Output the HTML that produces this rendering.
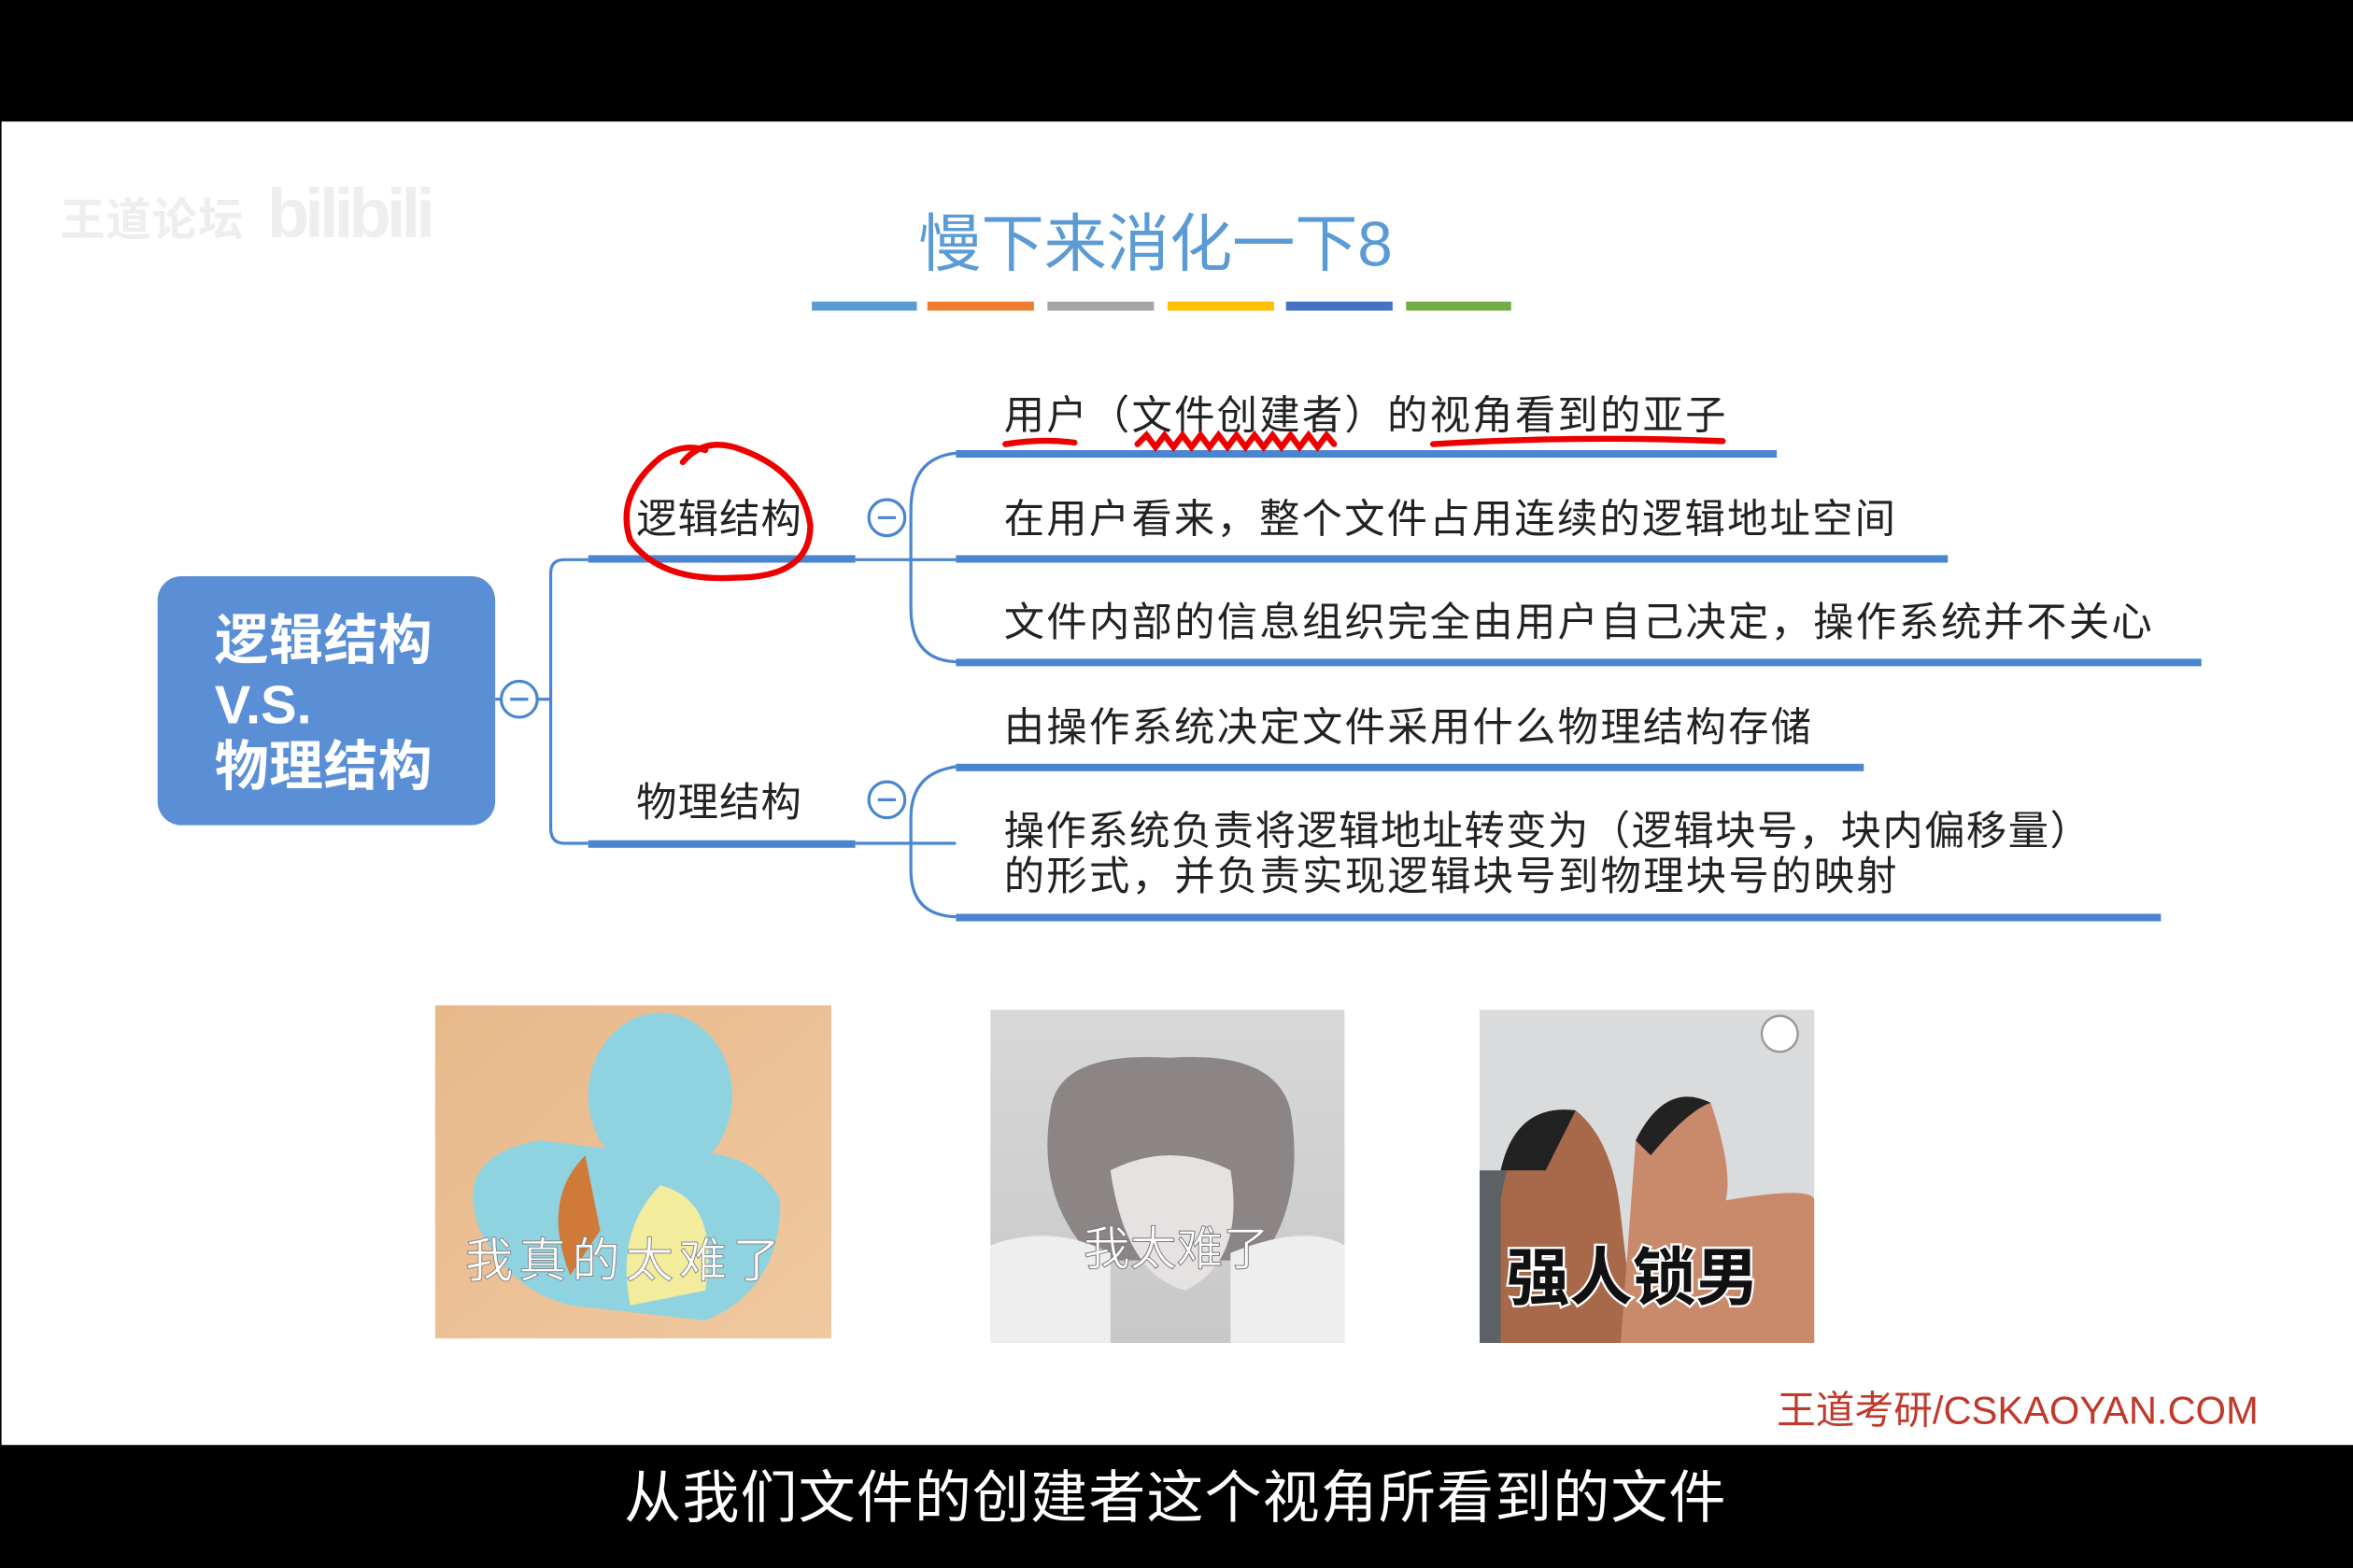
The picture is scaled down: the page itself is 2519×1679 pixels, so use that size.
<!DOCTYPE html>
<html><head><meta charset="utf-8"><style>
html,body{margin:0;padding:0;background:#000;overflow:hidden}
svg{display:block}
text{font-family:"Liberation Sans","Noto Sans CJK SC",sans-serif}
</style></head><body>
<svg width="2519" height="1679" viewBox="0 0 1568 1045" preserveAspectRatio="none" xmlns="http://www.w3.org/2000/svg">
<defs>
<linearGradient id="sq" x1="0" y1="0" x2="1" y2="1"><stop offset="0" stop-color="#e8b88a"/><stop offset="1" stop-color="#f0c9a0"/></linearGradient>
<linearGradient id="ct" x1="0" y1="0" x2="0" y2="1"><stop offset="0" stop-color="#d8d8d8"/><stop offset="1" stop-color="#c8c8c8"/></linearGradient>
</defs>
<rect x="0" y="0" width="1568" height="1045" fill="#000"/>
<rect x="1" y="81" width="1567" height="882" fill="#fff"/>
<text x="40" y="157" font-size="30" fill="#eeeeee" font-weight="bold" textLength="122">王道论坛</text>
<text x="178" y="158" font-size="46" fill="#eeeeee" font-weight="bold" textLength="112">bilibili</text>
<text x="612" y="177" font-size="42" fill="#5b9bd5" textLength="316">慢下来消化一下8</text>
<rect x="541" y="201" width="70" height="6" fill="#5b9bd5"/>
<rect x="618" y="201" width="71" height="6" fill="#ed7d31"/>
<rect x="698" y="201" width="71" height="6" fill="#a5a5a5"/>
<rect x="778" y="201" width="71" height="6" fill="#ffc000"/>
<rect x="857" y="201" width="71" height="6" fill="#4472c4"/>
<rect x="937" y="201" width="70" height="6" fill="#70ad47"/>
<rect x="105" y="384" width="225" height="166" rx="16" fill="#5a8fd6"/>
<text x="143" y="439" font-size="36" fill="#fff" font-weight="bold" textLength="145">逻辑结构</text>
<text x="143" y="482" font-size="36" fill="#fff" font-weight="bold">V.S.</text>
<text x="143" y="523" font-size="36" fill="#fff" font-weight="bold" textLength="145">物理结构</text>
<g fill="none" stroke="#4a86d0" stroke-width="2">
<line x1="330" y1="466" x2="334" y2="466"/>
<line x1="358" y1="466" x2="367" y2="466"/>
<path d="M392 373 H376 Q367 373 367 382 V552 Q367 562 376 562 H392"/>
<path d="M570 373 H637 M570 562 H637"/>
<path d="M637 302 Q607 305 607 340 V405 Q607 440 637 441"/>
<path d="M637 511 Q607 515 607 545 V580 Q607 610 637 611"/>
</g>
<g fill="#fff" stroke="#4a86d0" stroke-width="2"><circle cx="346" cy="466" r="12"/><circle cx="591" cy="345" r="12"/><circle cx="591" cy="533" r="12"/></g>
<g stroke="#4a86d0" stroke-width="2"><line x1="340" y1="466" x2="352" y2="466"/><line x1="585" y1="345" x2="597" y2="345"/><line x1="585" y1="533" x2="597" y2="533"/></g>
<g fill="#4a86d0">
<rect x="392" y="370" width="178" height="5"/><rect x="392" y="560" width="178" height="5"/>
<rect x="637" y="300" width="547" height="5"/><rect x="637" y="370" width="661" height="5"/>
<rect x="637" y="439" width="830" height="5"/><rect x="637" y="509" width="605" height="5"/>
<rect x="637" y="609" width="803" height="5"/>
</g>
<g font-size="27" fill="#222">
<text x="424" y="355" textLength="110">逻辑结构</text>
<text x="424" y="544" textLength="110">物理结构</text>
<text x="669" y="286" textLength="481">用户（文件创建者）的视角看到的亚子</text>
<text x="669" y="355" textLength="594">在用户看来，整个文件占用连续的逻辑地址空间</text>
<text x="669" y="424" textLength="765">文件内部的信息组织完全由用户自己决定，操作系统并不关心</text>
<text x="669" y="494" textLength="538">由操作系统决定文件采用什么物理结构存储</text>
<text x="669" y="563" textLength="724">操作系统负责将逻辑地址转变为（逻辑块号，块内偏移量）</text>
<text x="669" y="593" textLength="595">的形式，并负责实现逻辑块号到物理块号的映射</text>
</g>
<g fill="none" stroke="#e00" stroke-width="4" stroke-linecap="round">
<path d="M455 308 Q470 290 495 300 Q535 315 540 350 Q540 385 490 385 Q440 388 420 360 Q410 330 440 305 Q455 295 470 300"/>
<path d="M670 296 Q695 292 716 295"/>
<path d="M758 296 l6 -6 l6 8 l6 -8 l6 8 l6 -8 l6 8 l6 -8 l6 8 l6 -8 l6 8 l6 -8 l6 8 l6 -8 l6 8 l6 -8 l6 8 l6 -8 l6 8 l6 -8 l6 8 l6 -8 l5 6"/>
<path d="M955 296 Q1050 290 1148 294"/>
</g>
<rect x="290" y="670" width="264" height="222" fill="url(#sq)"/>
<ellipse cx="440" cy="730" rx="48" ry="55" fill="#8fd3e0"/>
<path d="M360 760 Q300 770 320 820 Q340 860 380 870 L470 880 Q520 860 520 800 Q500 760 440 770 Z" fill="#8fd3e0"/>
<path d="M390 770 Q360 800 380 850 L400 820 Z" fill="#d07a3a"/>
<path d="M440 790 Q480 800 470 860 L420 870 Q410 820 440 790Z" fill="#f3ec9c"/>
<text x="310" y="851" font-size="32" fill="#fff" stroke="#888" stroke-width="0.6" textLength="210">我真的太难了</text>
<rect x="660" y="673" width="236" height="222" fill="url(#ct)"/>
<path d="M700 740 Q705 700 780 705 Q850 700 860 740 Q870 800 840 840 L730 840 Q690 800 700 740Z" fill="#8b8586"/>
<path d="M740 780 Q780 760 820 780 Q830 840 790 860 Q750 850 740 780Z" fill="#e6e2e2"/>
<path d="M660 830 Q700 815 740 835 L740 895 L660 895Z M820 835 Q870 815 896 830 V895 H820Z" fill="#eeeeee"/>
<text x="722" y="843" font-size="31" fill="#fff" stroke="#777" stroke-width="0.6" textLength="124">我太难了</text>
<rect x="986" y="673" width="223" height="222" fill="#d9dbdc"/>
<rect x="986" y="780" width="40" height="115" fill="#5d6166"/>
<path d="M1000 800 Q1010 735 1050 740 Q1075 760 1080 810 L1090 895 H1000Z" fill="#a8684a"/>
<path d="M1090 760 Q1110 720 1140 735 Q1155 780 1150 800 Q1209 790 1209 800 V895 H1080Z" fill="#c98a6c"/>
<path d="M1000 780 Q1010 735 1050 740 Q1040 760 1030 780Z M1090 760 Q1110 720 1140 735 Q1125 740 1100 770Z" fill="#222"/>
<text x="1004" y="866" font-size="42" font-weight="bold" fill="#111" stroke="#fff" stroke-width="3" paint-order="stroke" textLength="168">强人锁男</text>
<circle cx="1186" cy="689" r="12" fill="#fff" stroke="#999" stroke-width="1.5"/>
<text x="1184" y="949" font-size="26" fill="#c0392b" textLength="321">王道考研/CSKAOYAN.COM</text>
<text x="416" y="1011" font-size="38" fill="#fff" textLength="734">从我们文件的创建者这个视角所看到的文件</text>
</svg>
</body></html>
